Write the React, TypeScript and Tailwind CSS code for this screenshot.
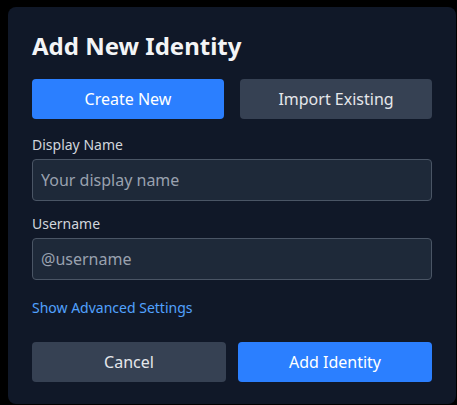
import { useState } from "react";

const font = { fontFamily: '"Noto Sans", "Open Sans", sans-serif' };

const Field = ({ label, placeholder }: { label: string; placeholder: string }) => (
  <div>
    <label className="block text-sm text-gray-300 mb-1">{label}</label>
    <input
      type="text"
      placeholder={placeholder}
      className="w-full h-[42px] px-2 py-2 bg-gray-800 border border-gray-600 rounded text-base text-gray-100 placeholder-gray-400 outline-none"
    />
  </div>
);

const App = () => {
  const [mode, setMode] = useState<"create" | "import">("create");

  return (
    <div className="min-h-screen bg-black pt-[7px] pl-2" style={font}>
      <div className="w-[448px] bg-gray-900 rounded-lg px-6 pt-[23px] pb-[22px]">
        <h2 className="text-2xl font-bold text-gray-100 mb-[17px]">Add New Identity</h2>

        <div className="grid grid-cols-2 gap-4 mb-4">
          <button
            onClick={() => setMode("create")}
            className={`h-10 rounded text-base ${mode === "create" ? "bg-blue-500 text-white" : "bg-gray-700 text-gray-200"}`}
          >
            Create New
          </button>
          <button
            onClick={() => setMode("import")}
            className={`h-10 rounded text-base ${mode === "import" ? "bg-blue-500 text-white" : "bg-gray-700 text-gray-200"}`}
          >
            Import Existing
          </button>
        </div>

        <div className="space-y-[13px]">
          <Field label="Display Name" placeholder="Your display name" />
          <Field label="Username" placeholder="@username" />
        </div>

        <button className="block mt-[18px] text-sm text-blue-400">Show Advanced Settings</button>

        <div className="grid grid-cols-2 gap-3 mt-6">
          <button className="h-10 rounded bg-gray-700 text-base text-gray-200">Cancel</button>
          <button className="h-10 rounded bg-blue-500 text-base text-white">Add Identity</button>
        </div>
      </div>
    </div>
  );
};

export default App;
